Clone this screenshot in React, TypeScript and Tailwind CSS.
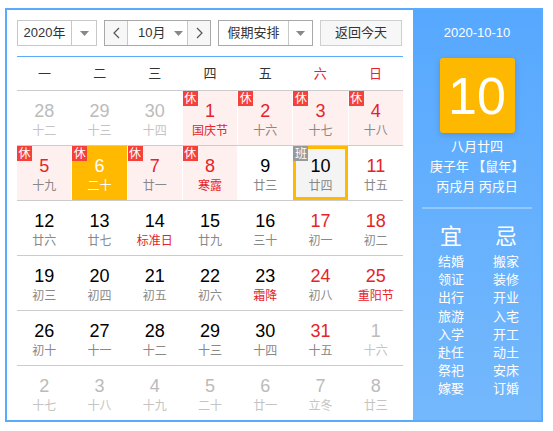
type Cell = {
  d: number;
  l: string;
  other?: boolean;
  red?: boolean;
  fest?: boolean;
  badge?: "休" | "班";
  pink?: boolean;
  selected?: boolean;
  today?: boolean;
};

const rows: Cell[][] = [
  [
    { d: 28, l: "十二", other: true },
    { d: 29, l: "十三", other: true },
    { d: 30, l: "十四", other: true },
    { d: 1, l: "国庆节", red: true, fest: true, badge: "休", pink: true },
    { d: 2, l: "十六", red: true, badge: "休", pink: true },
    { d: 3, l: "十七", red: true, badge: "休", pink: true },
    { d: 4, l: "十八", red: true, badge: "休", pink: true },
  ],
  [
    { d: 5, l: "十九", red: true, badge: "休", pink: true },
    { d: 6, l: "二十", badge: "休", selected: true },
    { d: 7, l: "廿一", red: true, badge: "休", pink: true },
    { d: 8, l: "寒露", red: true, fest: true, badge: "休", pink: true },
    { d: 9, l: "廿三" },
    { d: 10, l: "廿四", badge: "班", today: true },
    { d: 11, l: "廿五", red: true },
  ],
  [
    { d: 12, l: "廿六" },
    { d: 13, l: "廿七" },
    { d: 14, l: "标准日", fest: true },
    { d: 15, l: "廿九" },
    { d: 16, l: "三十" },
    { d: 17, l: "初一", red: true },
    { d: 18, l: "初二", red: true },
  ],
  [
    { d: 19, l: "初三" },
    { d: 20, l: "初四" },
    { d: 21, l: "初五" },
    { d: 22, l: "初六" },
    { d: 23, l: "霜降", fest: true },
    { d: 24, l: "初八", red: true },
    { d: 25, l: "重阳节", red: true, fest: true },
  ],
  [
    { d: 26, l: "初十" },
    { d: 27, l: "十一" },
    { d: 28, l: "十二" },
    { d: 29, l: "十三" },
    { d: 30, l: "十四" },
    { d: 31, l: "十五", red: true },
    { d: 1, l: "十六", other: true },
  ],
  [
    { d: 2, l: "十七", other: true },
    { d: 3, l: "十八", other: true },
    { d: 4, l: "十九", other: true },
    { d: 5, l: "二十", other: true },
    { d: 6, l: "廿一", other: true },
    { d: 7, l: "立冬", other: true },
    { d: 8, l: "廿三", other: true },
  ],
];

const weekdays = ["一", "二", "三", "四", "五", "六", "日"];
const yi = ["结婚", "领证", "出行", "旅游", "入学", "赴任", "祭祀", "嫁娶"];
const ji = ["搬家", "装修", "开业", "入宅", "开工", "动土", "安床", "订婚"];

function Caret() {
  return (
    <svg width="9" height="5" viewBox="0 0 9 5">
      <polygon points="0,0 9,0 4.5,5" fill="#888" />
    </svg>
  );
}

function Chevron({ dir }: { dir: "l" | "r" }) {
  return (
    <svg width="7" height="12" viewBox="0 0 7 12">
      <polyline
        points={dir === "l" ? "6,1 1,6 6,11" : "1,1 6,6 1,11"}
        fill="none"
        stroke="#555"
        strokeWidth="1.2"
      />
    </svg>
  );
}

function DayCell({ c }: { c: Cell }) {
  let bg = "bg-white";
  if (c.pink) bg = "bg-[#fff0f0]";
  if (c.selected) bg = "bg-[#ffb900]";
  if (c.today) bg = "bg-[#f4f4f4]";

  let num = "text-black";
  if (c.red) num = "text-[#e4242b]";
  if (c.other) num = "text-[#bbbbbb]";
  if (c.selected) num = "text-white";

  let lunar = "text-[#888]";
  if (c.fest) lunar = "text-[#e4242b]";
  if (c.other) lunar = "text-[#c4c4c4]";
  if (c.selected) lunar = "text-white";

  return (
    <div className={`relative flex h-[54px] flex-col items-center pt-[9px] ${bg}`}>
      {c.today && <div className="absolute inset-0 border-[3px] border-[#ffb900]" />}
      {c.badge && (
        <div
          className={`absolute left-0 top-0 z-10 flex h-[15px] w-[15px] items-center justify-center text-[12px] leading-none text-white ${
            c.badge === "休" ? "bg-[#f5403b]" : "bg-[#999]"
          }`}
        >
          {c.badge}
        </div>
      )}
      <span className={`relative text-[18px] leading-[22px] ${num}`}>{c.d}</span>
      <span className={`relative mt-[1px] text-[12px] leading-[16px] ${lunar}`}>{c.l}</span>
    </div>
  );
}

export default function App() {
  return (
    <div
      className="ml-[5px] mt-[8px] flex h-[414px] w-[538px] overflow-hidden border-2 border-[#5aabfd] text-[#333]"
      style={{ fontFamily: '"Liberation Sans", "Noto Sans CJK SC", sans-serif' }}
    >
      <div className="w-[406px] bg-white px-[10px] pt-[10px]">
        <div className="flex h-[26px] gap-[7px] whitespace-nowrap text-[13px]">
          <div className="flex w-[80px] border border-[#c8c8c8]">
            <div className="flex flex-1 items-center justify-center">2020年</div>
            <div className="flex w-[25px] items-center justify-center border-l border-[#c8c8c8]">
              <Caret />
            </div>
          </div>
          <div className="flex w-[107px] border border-[#a8a8a8]">
            <div className="flex w-[22px] items-center justify-center bg-[#f7f7f7]">
              <Chevron dir="l" />
            </div>
            <div className="flex flex-1 items-center gap-[9px] border-x border-[#c8c8c8] pl-[10px]">
              <span>10月</span>
              <Caret />
            </div>
            <div className="flex w-[22px] items-center justify-center bg-[#f7f7f7]">
              <Chevron dir="r" />
            </div>
          </div>
          <div className="flex w-[95px] border border-[#a8a8a8]">
            <div className="flex flex-1 items-center justify-center">假期安排</div>
            <div className="flex w-[24px] items-center justify-center border-l border-[#c8c8c8]">
              <Caret />
            </div>
          </div>
          <div className="flex w-[82px] items-center justify-center border border-[#cfcfcf] bg-[#f7f7f7]">
            返回今天
          </div>
        </div>
        <div className="mt-[10px] h-px bg-[#5aabfd]" />
        <div className="grid h-[34px] grid-cols-7 border-b border-[#cccccc] text-[13px]">
          {weekdays.map((w, i) => (
            <div
              key={w}
              className={`flex items-center justify-center ${i >= 5 ? "text-[#e4242b]" : "text-[#333]"}`}
            >
              {w}
            </div>
          ))}
        </div>
        {rows.map((r, ri) => (
          <div
            key={ri}
            className={`grid grid-cols-7 gap-x-px ${ri < rows.length - 1 ? "border-b border-[#cccccc]" : ""}`}
          >
            {r.map((c, ci) => (
              <DayCell key={ci} c={c} />
            ))}
          </div>
        ))}
      </div>
      <div className="flex flex-1 flex-col items-center bg-gradient-to-b from-[#56a8ff] to-[#74b8fc] text-white">
        <div className="mt-[14px] text-[13px] leading-[18px]">2020-10-10</div>
        <div className="mt-[16px] flex h-[75px] w-[75px] items-center justify-center rounded-[3px] bg-[#ffb800] shadow-[0_2px_6px_rgba(0,0,0,0.15)]">
          <span className="text-[52px] leading-none">10</span>
        </div>
        <div className="mt-[4px] flex flex-col items-center text-[13px] leading-[20px]">
          <div>八月廿四</div>
          <div>庚子年 【鼠年】</div>
          <div>丙戌月 丙戌日</div>
        </div>
        <div className="mt-[10px] h-[2px] w-[110px] bg-white/30" />
        <div className="mt-[14px] flex gap-[25px] pl-[3px]">
          <div className="flex w-[30px] flex-col items-center">
            <div className="text-[22px] leading-[28px]">宜</div>
            <div className="mt-[2px] flex flex-col items-center text-[13px] leading-[18.2px]">
              {yi.map((t) => (
                <div key={t}>{t}</div>
              ))}
            </div>
          </div>
          <div className="flex w-[30px] flex-col items-center">
            <div className="text-[22px] leading-[28px]">忌</div>
            <div className="mt-[2px] flex flex-col items-center text-[13px] leading-[18.2px]">
              {ji.map((t) => (
                <div key={t}>{t}</div>
              ))}
            </div>
          </div>
        </div>
      </div>
    </div>
  );
}
